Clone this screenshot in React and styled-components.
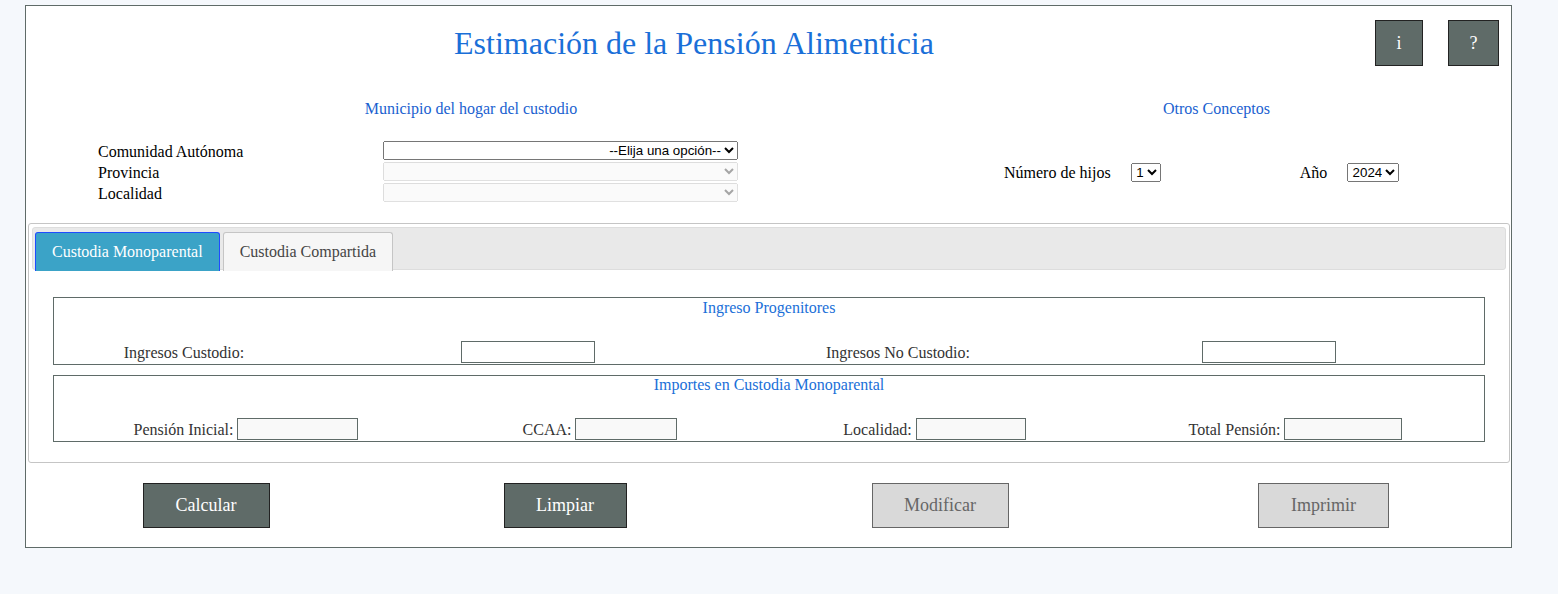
import React, { useState } from "react";
import styled, { createGlobalStyle } from "styled-components";

const GlobalStyle = createGlobalStyle`
  html, body {
    margin: 0;
    background: #f5f8fc;
    font-family: "Liberation Serif", "Times New Roman", serif;
  }
`;

const Page = styled.div`
  padding: 5px 0 40px 25px;
`;

const Container = styled.div`
  box-sizing: border-box;
  width: 1487px;
  background: #fff;
  border: 1px solid #5f6b68;
  padding: 14px 0 19px;
`;

const Header = styled.div`
  display: flex;
  align-items: center;
`;

const Title = styled.h1`
  width: 1336px;
  margin: 0;
  text-align: center;
  font-weight: normal;
  font-size: 32px;
  line-height: 46px;
  color: #1a6fd8;
`;

const IconButton = styled.button`
  box-sizing: border-box;
  width: ${({ $w }) => $w}px;
  height: 46px;
  padding: 0;
  margin-left: ${({ $gap }) => $gap}px;
  background: #5f6b68;
  border: 1px solid #222;
  color: #fff;
  font-family: "Liberation Serif", serif;
  font-size: 18px;
`;

const TopArea = styled.div`
  display: grid;
  grid-template-columns: 890px 1fr;
  margin-top: 34px;
`;

const Column = styled.div`
  padding-left: ${({ $shift }) => $shift || 0}px;
`;

const SectionTitle = styled.div`
  text-align: center;
  color: #1a5fd0;
  font-size: 16px;
  line-height: 18px;
`;

const FieldRows = styled.div`
  margin-top: 23px;
  padding-left: 72px;
  display: grid;
  grid-template-columns: 285px 355px;
  grid-auto-rows: 21px;
  align-items: start;
`;

const Label = styled.label`
  font-size: 16px;
  line-height: 21px;
  color: ${({ $muted }) => ($muted ? "#333" : "#000")};
`;

const Select = styled.select`
  font-family: "Liberation Sans", Arial, sans-serif;
  font-size: 13.33px;
  height: 19px;
  width: ${({ $w }) => ($w ? `${$w}px` : "auto")};
  text-align-last: right;
  padding: 0;
`;

const OtherRow = styled.div`
  height: 63px;
  margin-top: 23px;
  padding-left: 82px;
  display: flex;
  align-items: center;
`;

const Spacer = styled.span`
  display: inline-block;
  width: ${({ $w }) => $w}px;
`;

const TabsPanel = styled.div`
  margin: 19px 1px 0 2px;
  border: 1px solid #c5c5c5;
  border-radius: 3px;
  padding: 3px;
`;

const TabBar = styled.div`
  display: flex;
  gap: 3px;
  height: 43px;
  padding: 4px 2px 0;
  box-sizing: border-box;
  background: #e9e9e9;
  border: 1px solid #ddd;
  border-radius: 3px;
`;

const Tab = styled.button`
  height: 39px;
  padding: 0 16px;
  font-family: "Liberation Serif", serif;
  font-size: 16px;
  border-radius: 3px 3px 0 0;
  border: 1px solid ${({ $active }) => ($active ? "#1f4cff" : "#c5c5c5")};
  border-bottom: none;
  background: ${({ $active }) => ($active ? "#3ba3c7" : "#f6f6f6")};
  color: ${({ $active }) => ($active ? "#fff" : "#454545")};
`;

const TabContent = styled.div`
  padding: 27px 21px 17px;
  display: flex;
  flex-direction: column;
  gap: 10px;
`;

const Box = styled.div`
  border: 1px solid #5f6b68;
  padding: ${({ $tight }) => ($tight ? 0 : 1)}px 0 1px;
`;

const BoxTitle = styled.div`
  text-align: center;
  color: #1a6fd8;
  font-size: 16px;
  line-height: 18px;
`;

const BoxRow = styled.div`
  margin-top: 24px;
  display: grid;
  grid-template-columns: ${({ $cols }) => $cols};
  justify-items: center;
  align-items: center;
  height: 22px;
`;

const Pair = styled.div`
  display: flex;
  align-items: center;
  gap: 4px;
`;

const TextInput = styled.input`
  box-sizing: border-box;
  width: ${({ $w }) => $w}px;
  height: 22px;
  border: 1px solid #5f6b68;
  background: ${({ readOnly }) => (readOnly ? "#f9f9f9" : "#fff")};
  padding: 0 3px;
  font-family: "Liberation Serif", serif;
  font-size: 14px;
`;

const Actions = styled.div`
  margin-top: 20px;
  display: grid;
  grid-template-columns: 360px 358px 392px 1fr;
  justify-items: center;
`;

const ActionButton = styled.button`
  box-sizing: border-box;
  width: ${({ $w }) => $w}px;
  height: 45px;
  padding: 0;
  font-family: "Liberation Serif", serif;
  font-size: 18px;
  background: ${({ disabled }) => (disabled ? "#d9d9d9" : "#5f6b68")};
  color: ${({ disabled }) => (disabled ? "#666" : "#fff")};
  border: 1px solid ${({ disabled }) => (disabled ? "#666" : "#222")};
`;

export default function App() {
  const [tab, setTab] = useState(0);
  return (
    <Page>
      <GlobalStyle />
      <Container>
        <Header>
          <Title>Estimación de la Pensión Alimenticia</Title>
          <IconButton $gap={13} $w={48}>
            i
          </IconButton>
          <IconButton $gap={25} $w={51}>
            ?
          </IconButton>
        </Header>

        <TopArea>
          <Column>
            <SectionTitle>Municipio del hogar del custodio</SectionTitle>
            <FieldRows>
              <Label>Comunidad Autónoma</Label>
              <Select $w={355}>
                <option>--Elija una opción--</option>
              </Select>
              <Label>Provincia</Label>
              <Select $w={355} disabled>
                <option></option>
              </Select>
              <Label>Localidad</Label>
              <Select $w={355} disabled>
                <option></option>
              </Select>
            </FieldRows>
          </Column>
          <Column $shift={6}>
            <SectionTitle>Otros Conceptos</SectionTitle>
            <OtherRow>
              <Label>Número de hijos</Label>
              <Spacer $w={20} />
              <Select>
                <option>1</option>
              </Select>
              <Spacer $w={139} />
              <Label>Año</Label>
              <Spacer $w={20} />
              <Select>
                <option>2024</option>
              </Select>
            </OtherRow>
          </Column>
        </TopArea>

        <TabsPanel>
          <TabBar>
            <Tab $active={tab === 0} onClick={() => setTab(0)}>
              Custodia Monoparental
            </Tab>
            <Tab $active={tab === 1} onClick={() => setTab(1)}>
              Custodia Compartida
            </Tab>
          </TabBar>
          <TabContent>
            <Box>
              <BoxTitle>Ingreso Progenitores</BoxTitle>
              <BoxRow $cols="260px 428px 312px 1fr">
                <Label $muted>Ingresos Custodio:</Label>
                <TextInput $w={134} />
                <Label $muted>Ingresos No Custodio:</Label>
                <TextInput $w={134} />
              </BoxRow>
            </Box>
            <Box $tight>
              <BoxTitle>Importes en Custodia Monoparental</BoxTitle>
              <BoxRow $cols="384px 324px 345px 1fr">
                <Pair>
                  <Label $muted>Pensión Inicial:</Label>
                  <TextInput $w={121} readOnly />
                </Pair>
                <Pair>
                  <Label $muted>CCAA:</Label>
                  <TextInput $w={102} readOnly />
                </Pair>
                <Pair>
                  <Label $muted>Localidad:</Label>
                  <TextInput $w={110} readOnly />
                </Pair>
                <Pair>
                  <Label $muted>Total Pensión:</Label>
                  <TextInput $w={118} readOnly />
                </Pair>
              </BoxRow>
            </Box>
          </TabContent>
        </TabsPanel>

        <Actions>
          <ActionButton $w={127}>Calcular</ActionButton>
          <ActionButton $w={123}>Limpiar</ActionButton>
          <ActionButton $w={137} disabled>
            Modificar
          </ActionButton>
          <ActionButton $w={131} disabled>
            Imprimir
          </ActionButton>
        </Actions>
      </Container>
    </Page>
  );
}
